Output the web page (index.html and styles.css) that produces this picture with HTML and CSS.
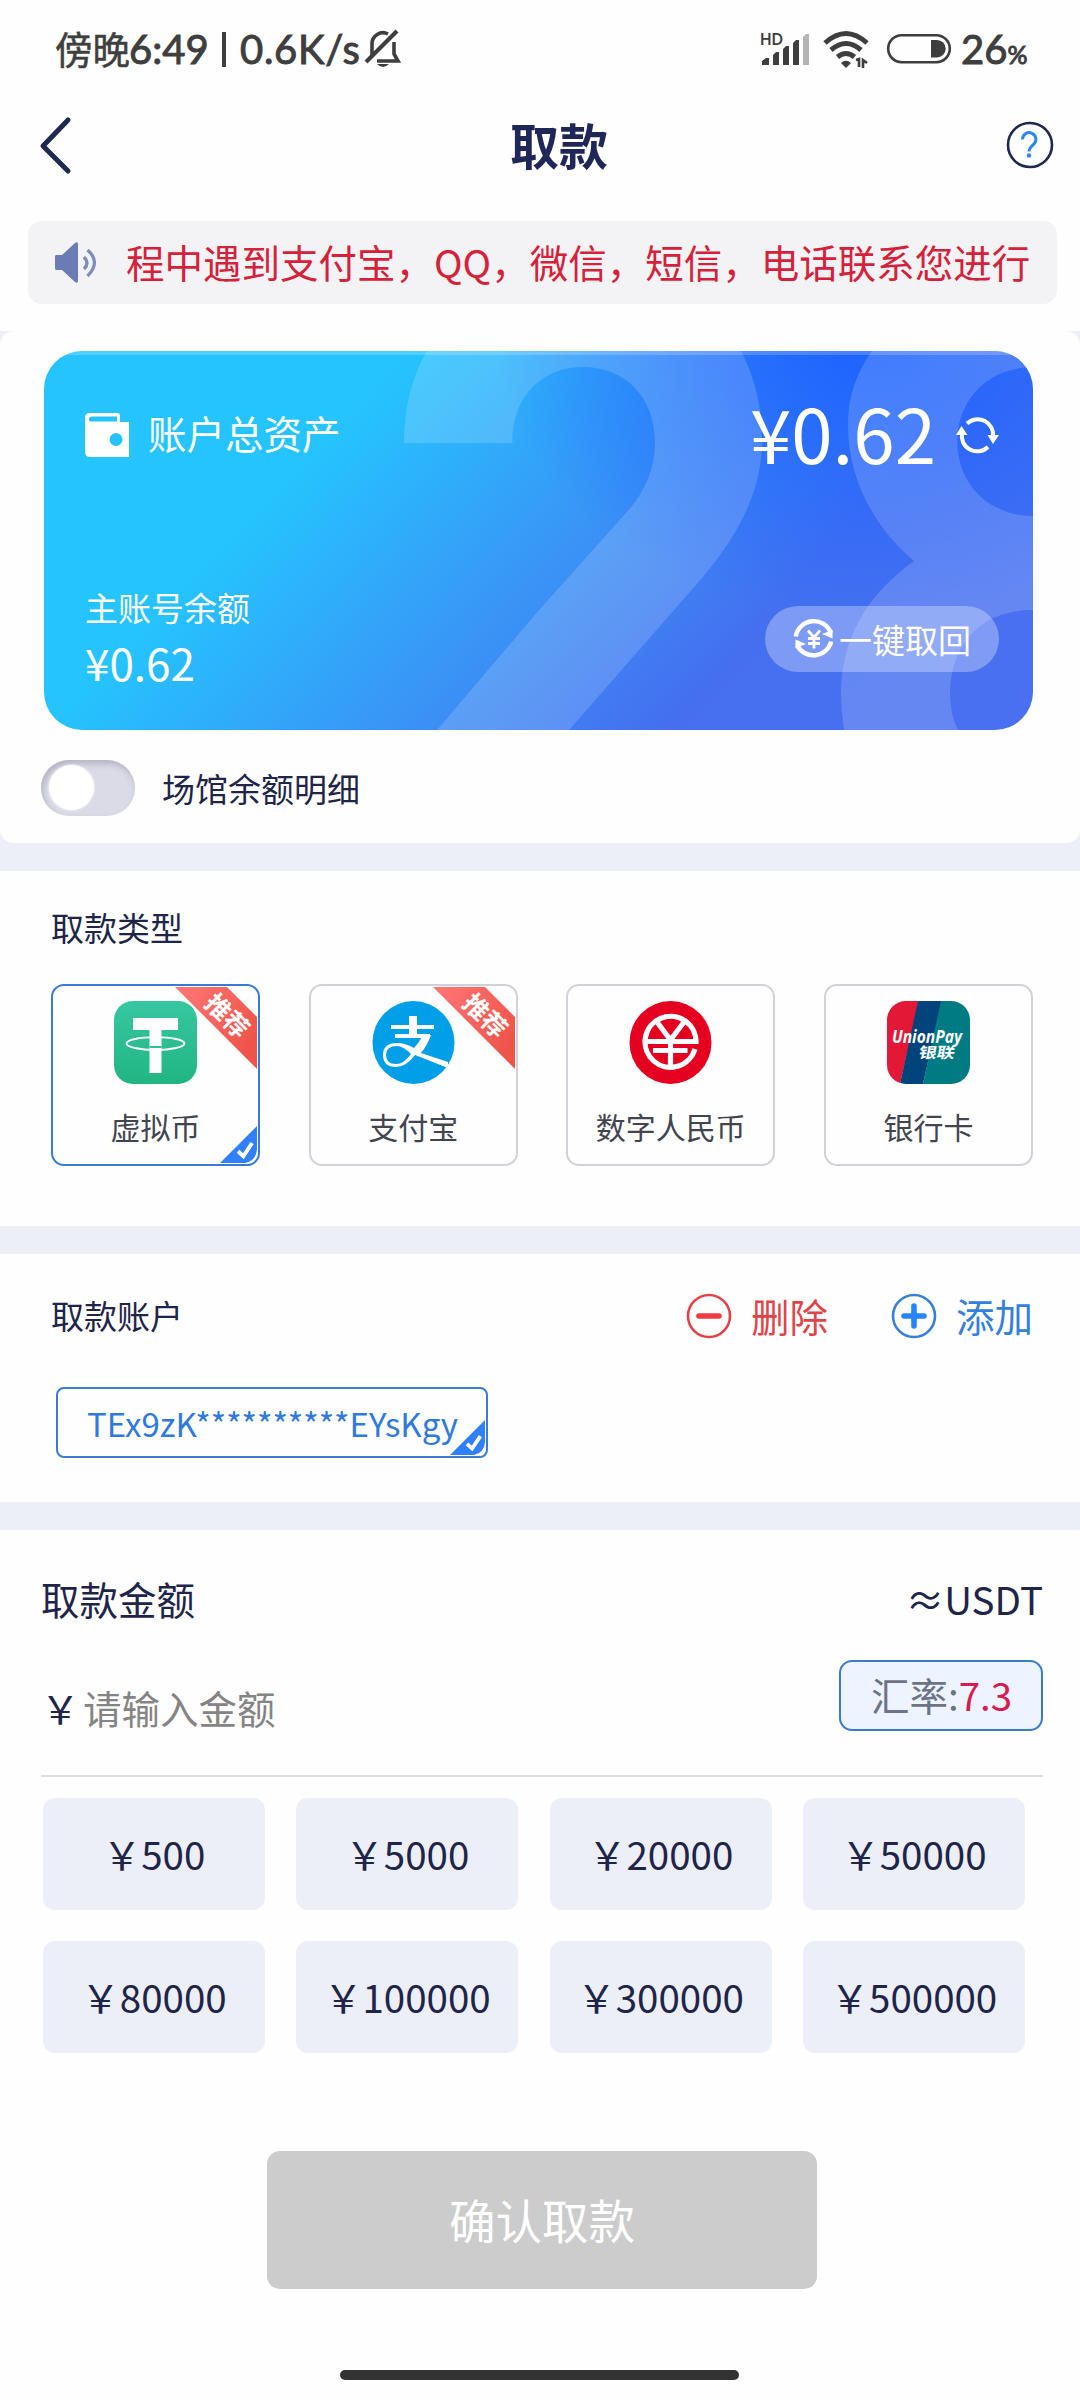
FILE: index.html
```html
<!DOCTYPE html>
<html lang="zh-CN">
<head>
<meta charset="utf-8">
<title>取款</title>
<link rel="stylesheet" href="styles.css">
</head>
<body>
<div class="screen">
  <div class="status">
    <div class="status-left">
      <span class="status-cjk">傍晚</span><span class="status-num time">6:49</span><i class="status-bar"></i><span class="status-num speed">0.6K/s</span>
      <svg class="bell" width="36" height="40" viewBox="0 0 36 40"><path d="M7 26V15a11 11 0 0 1 16-10M29 13v12l4 7H12" fill="none" stroke="#3e3e3e" stroke-width="3.6"/><path d="M1 33L32 2" stroke="#3e3e3e" stroke-width="4"/><path d="M12 35h12q-6 6-12 0z" fill="#3e3e3e"/></svg>
    </div>
    <div class="status-right">
      <svg class="signal" width="50" height="36" viewBox="0 0 50 36"><text x="0" y="14" class="hd" textLength="23" lengthAdjust="spacingAndGlyphs">HD</text><g fill="#3e3e3e"><path d="M2 34v-4l4-3h3v7zM13 34V24l3-3h3v13zM23 34V18l3-3h3v19zM33 34V12l3-3h3v25z"/><path d="M43 34V6l3-3h3v31z" fill="#b4b4b4"/></g></svg>
      <svg class="wifi" width="48" height="38" viewBox="0 0 48 38"><g fill="none" stroke="#3e3e3e" stroke-width="5"><path d="M2 13q21-19 42 0"/><path d="M8 20q15-13 30 0"/><path d="M14.500 27q8.500-7 17 0"/></g><path d="M18 33q5-4.500 10 0l-5 5z" fill="#3e3e3e"/><path d="M33 30l3-1v8M40 38v-8l4 3" fill="none" stroke="#3e3e3e" stroke-width="2.600"/></svg>
      <svg class="battery" width="64" height="30" viewBox="0 0 64 30"><rect x="1.200" y="1.200" width="61.600" height="27" rx="13.500" fill="none" stroke="#3e3e3e" stroke-width="2.600"/><path d="M44 6h6a8.700 8.700 0 0 1 0 17.400h-6z" fill="#3e3e3e"/></svg>
      <span class="status-num pct">26<small>%</small></span>
    </div>
  </div>

  <div class="header">
    <svg class="back" width="34" height="60" viewBox="0 0 34 60"><path d="M30 4L5 30l25 25" fill="none" stroke="#1f284d" stroke-width="5" stroke-linecap="round" stroke-linejoin="round"/></svg>
    <h1 class="title">取款</h1>
    <svg class="help" width="48" height="48" viewBox="0 0 48 48"><circle cx="24" cy="24" r="22" fill="none" stroke="#1f284d" stroke-width="2.600"/><path d="M16.500 18.500a6.700 6.700 0 1 1 11 5c-3 2.500-4.500 4-4.500 7" fill="none" stroke="#2e86f0" stroke-width="3"/><circle cx="23" cy="34.500" r="2.200" fill="#2e86f0"/></svg>
  </div>

  <div class="notice">
    <svg width="42" height="44" viewBox="0 0 42 44"><path d="M1 14h6L20 2q3-2 3 1v37q0 3-3 1L7 29H1q-1 0-1-2V16q0-2 1-2z" fill="#6b7bb6"/><path d="M29 16q6 6 0 12M32.500 9q14 12 0 26" fill="none" stroke="#7c8bc0" stroke-width="3.200"/></svg>
    <span>程中遇到支付宝，QQ，微信，短信，电话联系您进行</span>
  </div>

  <div class="panel-wrap">
  <div class="panel">
    <div class="balance">
      <svg class="balance-art" width="989" height="379" viewBox="44 351 989 379"><g fill="#fff" fill-opacity=".16"><path d="M404 443h108.400C512 395 543 367 583 367c42 0 72 30 72 76 0 27-11 50-29 70L540 609 437 730H569L702 578C740 533 762 490 762 440c0-35-8-64-21-89H427C411 378 404 410 404 443z"/><path fill-rule="evenodd" d="M1033 351H871.600C856 374 848 397 848 425c0 55 27 103 66 136-45 32-73 76-73 133q0 18 3 36H958c-18-34-10-120 75-120v-94c-101-2-101-147 0-149z"/></g><rect x="44" y="351" width="989" height="4" fill="#fff" fill-opacity=".2"/></svg>
      <div class="row top">
        <svg class="wallet" width="44" height="44" viewBox="0 0 44 44"><path fill="#fff" fill-rule="evenodd" d="M5 0h27q3 0 3 3v6h9v35H5q-5 0-5-5V5q0-5 5-5zM7 3.500Q4 3.500 4 6v1q0 1.500 2 1.500h26v-5zM31 20a6.500 6.500 0 1 0 0 13a6.500 6.500 0 0 0 0-13z"/></svg>
        <span class="label">账户总资产</span>
        <span class="total">¥0.62</span>
        <svg class="refresh" width="42" height="38" viewBox="0 0 42 38"><g fill="none" stroke="#fff" stroke-width="4"><path d="M10 7.500a15.500 15.500 0 0 1 26 13.500M31 31A15.500 15.500 0 0 1 5 17"/></g><path d="M30.500 19l5.500 9 6-9zM-1 19l5.500-9 6 9z" fill="#fff"/></svg>
      </div>
      <div class="row bottom">
        <div class="main-account"><span class="sub">主账号余额</span><span class="amount">¥0.62</span></div>
        <div class="pill">
          <svg width="42" height="42" viewBox="0 0 42 42"><g fill="none" stroke="#fff" stroke-width="4.400"><path d="M2.800 18.500A18.300 18.300 0 0 1 38 15M38.200 23.500A18.300 18.300 0 0 1 4 27"/></g><path d="M29 16l10.500 4.500V12zM13 26L2.500 21.500V30z" fill="#fff"/><path d="M15 12.500l6 7 6-7M21 19v11.500M15 20.500h12M15 25.500h12" fill="none" stroke="#fff" stroke-width="2.800"/></svg>
          <span>一键取回</span>
        </div>
      </div>
    </div>
    <div class="toggle-row"><i class="toggle"></i><span>场馆余额明细</span></div>
  </div>
  </div>

  <section class="types">
    <h2>取款类型</h2>
    <div class="type-list">
      <div class="type selected">
        <svg class="logo" width="83" height="83" viewBox="0 0 83 83"><defs><linearGradient id="tg" x2="0" y2="1"><stop stop-color="#37c7a0"/><stop offset="1" stop-color="#21b583"/></linearGradient></defs><rect width="83" height="83" rx="19" fill="url(#tg)"/><path d="M19 17h45v12H47.500v43h-12V29H19z" fill="#fff"/><path d="M35.500 45h12v2h-12z" fill="#2ebf95"/><ellipse cx="41.500" cy="42.500" rx="29" ry="6.400" fill="none" stroke="#fff" stroke-width="1.900"/></svg>
        <span>虚拟币</span>
        <svg class="ribbon" width="82" height="82" viewBox="0 0 82 82"><defs><linearGradient id="rb" x2="1" y2=".6"><stop stop-color="#ff7777"/><stop offset="1" stop-color="#ee5449"/></linearGradient></defs><path d="M0 0h52l30 30v52z" fill="url(#rb)"/><text x="52" y="29" transform="rotate(45 52 29)" dy="9" text-anchor="middle">推荐</text></svg>
        <svg class="tick" width="37" height="37" viewBox="0 0 38 38"><path d="M38 0v24q-1 12-12 14H0z" fill="#2f80fa"/><path d="M18.500 26l5.500 5 9-13.500" fill="none" stroke="#fff" stroke-width="4"/></svg>
      </div>
      <div class="type">
        <svg class="logo" width="83" height="83" viewBox="0 0 83 83"><ellipse cx="41.500" cy="41.500" rx="41" ry="41.500" fill="#019fe8"/><path d="M19 24h43v4H19zM23 33h35v4H23zM37 15h8v20h-8z" fill="#fff"/><path d="M51 34h8q-4 11-10 18l27 9v6L43 54q-9 12-19 12-13 0-13-12t14-12q8 0 17 5 5-5 9-13zM25 45q-11 0-11 9 0 9 10 9 8 0 15-10-8-8-14-8z" fill="#fff" fill-rule="evenodd"/></svg>
        <span>支付宝</span>
        <svg class="ribbon" width="82" height="82" viewBox="0 0 82 82"><path d="M0 0h52l30 30v52z" fill="url(#rb)"/><text x="52" y="29" transform="rotate(45 52 29)" dy="9" text-anchor="middle">推荐</text></svg>
      </div>
      <div class="type">
        <svg class="logo" width="83" height="83" viewBox="0 0 83 83"><ellipse cx="41.500" cy="41.500" rx="41" ry="41.500" fill="#e60020"/><g fill="none" stroke="#fff" stroke-width="5.200"><path d="M67 42A25.500 25.500 0 1 0 66 48M24 49.500H58.500M18 40.500H69.500M28 21l13.500 18L55 21M41.500 38v31"/></g></svg>
        <span>数字人民币</span>
      </div>
      <div class="type">
        <svg class="logo" width="83" height="83" viewBox="0 0 83 83"><defs><clipPath id="up"><rect width="83" height="83" rx="19"/></clipPath></defs><g clip-path="url(#up)"><path fill="#e21836" d="M0 0h32L13 83H0z"/><path fill="#00447b" d="M31 0h24L36 83H13z"/><path fill="#007b84" d="M54 0h29v83H36z"/></g><text class="up-en" x="5" y="42" textLength="70" lengthAdjust="spacingAndGlyphs">UnionPay</text><text class="up-cn" x="0" y="0" transform="translate(31 57) skewX(-10)" textLength="36" lengthAdjust="spacingAndGlyphs">银联</text></svg>
        <span>银行卡</span>
      </div>
    </div>
  </section>

  <section class="accounts">
    <div class="accounts-head">
      <h2>取款账户</h2>
      <div class="action del"><svg width="46" height="46" viewBox="0 0 46 46"><circle cx="23" cy="23" r="21" fill="none" stroke="currentColor" stroke-width="2.600"/><path d="M13 23h20" stroke="#f03b41" stroke-width="5.600" stroke-linecap="round"/></svg><span>删除</span></div>
      <div class="action add"><svg width="46" height="46" viewBox="0 0 46 46"><circle cx="23" cy="23" r="21" fill="none" stroke="currentColor" stroke-width="2.600"/><path d="M13 23h20M23 13v20" stroke="#2685fb" stroke-width="5.600" stroke-linecap="round"/></svg><span>添加</span></div>
    </div>
    <div class="address"><span>TEx9zK**********EYsKgy</span><svg class="tick" width="35" height="35" viewBox="0 0 38 38"><path d="M38 0v24q-1 12-12 14H0z" fill="#2f80fa"/><path d="M18.500 26l5.500 5 9-13.500" fill="none" stroke="#fff" stroke-width="4"/></svg></div>
  </section>

  <section class="amounts">
    <div class="amount-head"><h2>取款金额</h2><span>≈USDT</span></div>
    <div class="amount-input"><span class="yen">￥</span><span class="placeholder">请输入金额</span><div class="rate">汇率:<b>7.3</b></div></div>
    <div class="quick">
      <div>￥500</div><div>￥5000</div><div>￥20000</div><div>￥50000</div>
      <div>￥80000</div><div>￥100000</div><div>￥300000</div><div>￥500000</div>
    </div>
    <div class="submit">确认取款</div>
  </section>
  <i class="home"></i>
</div>
</body>
</html>
```
FILE: styles.css
```css
* { box-sizing: border-box; margin: 0; padding: 0; }
body { width: 1080px; height: 2400px; background: #fefefe; color: #1f2549; font-family: "Noto Sans CJK SC", sans-serif; font-size: 38.5px; line-height: 1; font-weight: 400; overflow: hidden; }
.screen { width: 1080px; height: 2400px; display: flex; flex-direction: column; }
svg { display: block; flex: none; overflow: visible; }
h1, h2, b { font-weight: 400; }
span, h1, h2 { white-space: nowrap; }

.status { height: 101px; padding: 28px 53px 0 55px; display: flex; justify-content: space-between; color: #3e3e3e; }
.status-left, .status-right { display: flex; align-items: center; height: 42px; }
.status-cjk { font-size: 37.5px; width: 74px; padding-bottom: 2px; -webkit-text-stroke: .5px #3e3e3e; }
.status-num { font-family: Lato, sans-serif; font-weight: 400; font-size: 40px; -webkit-text-stroke: 1px #3e3e3e; }
.time { width: 78px; }
.status-bar { width: 4px; height: 35px; background: #3e3e3e; margin: 0 14px 0 15px; }
.speed { width: 119px; letter-spacing: .7px; }
.bell { margin-left: 6px; }
.hd { font: 700 17px Lato, sans-serif; fill: #3e3e3e; }
.wifi { margin-left: 13px; }
.battery { margin-left: 16px; }
.pct { margin-left: 10px; width: 66px; }
.pct small { font-size: 25px; }

.header { height: 120px; padding: 15px 26px 0 38px; display: flex; justify-content: space-between; align-items: flex-start; }
.title { font-size: 49px; font-weight: 700; color: #1f2658; margin: 3px 0 0 40px; }
.help { margin-top: 5px; }

.notice { margin: 0 23px 27px 28px; height: 83px; border-radius: 14px; background: #f3f3f5; padding-left: 27px; display: flex; align-items: center; color: #d5213a; }
.notice span { margin-left: 29px; padding-bottom: 3px; }

.panel-wrap { background: #eceff7; }
.panel { height: 512px; padding: 20px 47px 0 44px; border-radius: 14px; background: #fefefe; }
.balance { position: relative; height: 379px; border-radius: 38px; overflow: hidden; color: #fff; padding: 50px 34px 0 41px; display: flex; flex-direction: column; justify-content: space-between;
  background: radial-gradient(ellipse 370px 290px at 820px -20px, #1b62ff 0%, #1f63ffaa 40%, #2a66ff00 100%), linear-gradient(134deg, #25c4fe 0%, #25c4fe 27%, #3a93f6 53%, #4470f0 72%, #4a70f0 100%); }
.balance-art { position: absolute; left: 0; top: 0; }
.row { position: relative; display: flex; }
.top { align-items: center; height: 66px; }
.wallet { margin-top: 1px; }
.refresh { margin-top: 1px; }
.label { margin-left: 19px; padding-bottom: 3px; }
.total { font-size: 74.500px; margin-left: auto; margin-right: 21px; margin-top: -3px; }
.bottom { height: 160px; justify-content: space-between; font-size: 33px; }
.main-account { display: flex; flex-direction: column; }
.sub { margin-top: 21px; }
.amount { font-size: 44px; margin-top: 16px; }
.pill { width: 234px; height: 66px; border-radius: 33px; margin-top: 36px; background: #ffffff4d; display: flex; align-items: center; padding-left: 28px; }
.pill span { margin-left: 4px; }
.toggle-row { display: flex; align-items: center; height: 56px; margin: 30px 0 0 -3px; font-size: 33px; }
.toggle { width: 94px; height: 56px; border-radius: 28px; background: #dadbe6; box-shadow: inset 2px 4px 6px #b4b4c4; padding: 5px 8px; margin-right: 27px; }
.toggle::before { content: ""; display: block; width: 45px; height: 45px; border-radius: 50%; background: #fff; box-shadow: 0 0 3px #fff; }

section { border-top: 28px solid #eceff7; }
h2 { font-size: 33px; }
.types { height: 383px; padding: 40px 47px 0 51px; }
.type-list { display: grid; grid-template-columns: repeat(4, 209px); justify-content: space-between; margin-top: 40px; }
.type { position: relative; height: 182px; border: 2px solid #d0d2d8; border-radius: 13px; display: flex; flex-direction: column; align-items: center; padding-top: 15px; font-size: 30px; color: #42454f; }
.type span { margin-top: 27px; }
.selected { border-color: #3a7bd4; }
.ribbon { position: absolute; right: 1px; top: 1px; }
.ribbon text { font-size: 25px; font-weight: 700; fill: #fff; }
.tick { position: absolute; right: 1px; bottom: 1px; }
.up-en { font: italic 700 18px "Open Sans", sans-serif; fill: #fff; }
.up-cn { font-size: 15px; font-weight: 700; fill: #fff; }

.accounts { height: 276px; padding: 0 47px 0 51px; }
.accounts-head { display: flex; align-items: center; height: 124px; }
.accounts-head h2 { margin-right: auto; padding-bottom: 2px; }
.action { display: flex; align-items: center; margin-left: 63px; }
.action span { margin-left: 19px; padding-bottom: 1px; }
.del { color: #e04449; }
.add { color: #3580dc; }
.address { position: relative; width: 432px; height: 71px; margin: 9px 0 0 5px; border: 2px solid #3a7bd4; border-radius: 8px; color: #3079dd; font-size: 33px; padding: 18px 0 0 29px; }

.amounts { height: 840px; padding: 0 37px 0 41px; }
.amounts h2 { font-size: 38.5px; }
.amount-head { display: flex; justify-content: space-between; padding: 49px 0 0 0; }
.amount-input { display: flex; height: 159px; border-bottom: 2px solid #dedede; }
.yen { margin: 70px 0 0 0; width: 42px; }
.placeholder { margin-top: 70px; color: #848484; }
.rate { width: 204px; height: 71px; margin: 42px 0 0 auto; border: 2px solid #3b7bcb; border-radius: 13px; background: #edf3ff; padding: 13px 0 0 30px; color: #6d7387; }
.rate b { color: #d71c50; }
.quick { display: grid; grid-template-columns: repeat(4, 222px); column-gap: 31.300px; row-gap: 31px; margin: 21px 0 0 2px; }
.quick div { height: 112px; border-radius: 12px; background: #eceff7; display: flex; align-items: center; justify-content: center; white-space: nowrap; }
.submit { width: 550px; height: 138px; margin: 98px 0 0 226px; border-radius: 13px; background: #ccc; color: #fff; font-size: 46.500px; display: flex; align-items: center; justify-content: center; }
.home { width: 399px; height: 10px; border-radius: 5px; background: #333; margin: auto 0 20px 340px; }
```
